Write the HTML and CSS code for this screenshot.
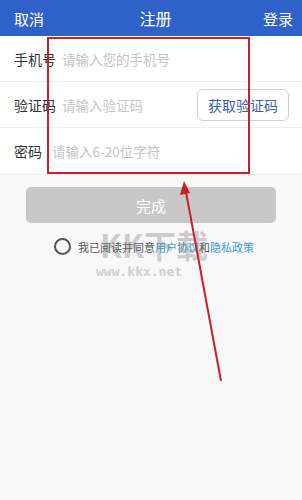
FILE: index.html
```html
<!DOCTYPE html>
<html lang="zh">
<head>
<meta charset="utf-8">
<link rel="stylesheet" href="styles.css">
</head>
<body>
<div class="page">
  <header class="topbar">
    <span class="tb-left">取消</span>
    <span class="tb-title">注册</span>
    <span class="tb-right">登录</span>
  </header>
  <section class="form">
    <div class="row">
      <span class="label">手机号</span>
      <span class="ph">请输入您的手机号</span>
    </div>
    <div class="row">
      <span class="label">验证码</span>
      <span class="ph">请输入验证码</span>
      <span class="code-btn">获取验证码</span>
    </div>
    <div class="row">
      <span class="label short">密码</span>
      <span class="ph">请输入6-20位字符</span>
    </div>
  </section>
  <div class="actions">
    <div class="done">完成</div>
    <div class="agree">
      <span class="circle"></span>
      <span class="agree-text">我已阅读并同意<span class="link">用户协议</span>和<span class="link">隐私政策</span></span>
    </div>
  </div>
  <div class="redbox"></div>
  <svg class="overlay" width="302" height="500" viewBox="0 0 302 500">
    <text class="wm-big" x="100" y="258">KK下载</text>
    <text class="wm-small" x="96" y="276">www.kkx.net</text>
    <line x1="221" y1="381" x2="186" y2="192" stroke="#c8202a" stroke-width="2"/>
    <polygon points="184,181 180,195 190,193" fill="#c8202a"/>
  </svg>
</div>
</body>
</html>
```
FILE: styles.css
```css
* { box-sizing: border-box; }
html, body { margin: 0; padding: 0; }
body {
  width: 302px;
  height: 500px;
  overflow: hidden;
  background: #f8f8f8;
  font-family: "Noto Sans CJK SC", "Noto Sans", sans-serif;
}
.page { position: relative; width: 302px; height: 500px; }
.topbar {
  height: 36px;
  background: #2e62c8;
  color: #fff;
  display: flex;
  align-items: center;
  justify-content: space-between;
  padding: 0 9px 0 14px;
  font-size: 15px;
}
.tb-title { font-size: 16px; margin-left: 4px; }
.form { background: #fff; }
.row {
  height: 46px;
  display: flex;
  align-items: center;
  padding-left: 14px;
  border-bottom: 1px solid #eeeeee;
  font-size: 14px;
}
.row:last-child { height: 47px; }
.label { color: #333; width: 48px; }
.label.short { width: 38px; }
.ph { color: #c4c4c4; font-size: 13.5px; flex: 1; }
.code-btn {
  width: 92px;
  height: 32px;
  margin-right: 13px;
  border: 1px solid #cdd1d8;
  border-radius: 6px;
  display: flex;
  align-items: center;
  justify-content: center;
  color: #3c5fa8;
  font-size: 14px;
}
.actions { padding: 12px 26px 0; }
.done {
  height: 36px;
  background: #c8c8c8;
  border-radius: 5px;
  color: #fff;
  font-size: 15px;
  display: flex;
  align-items: center;
  justify-content: center;
}
.agree {
  margin-top: 15px;
  display: flex;
  align-items: center;
  padding-left: 28px;
  font-size: 11px;
  color: #555;
  white-space: nowrap;
}
.circle {
  flex: none;
  width: 17px;
  height: 17px;
  border: 2px solid #555;
  border-radius: 50%;
  margin-right: 7px;
}
.link { color: #3d9bd6; }
.redbox {
  position: absolute;
  left: 47px;
  top: 37px;
  width: 203px;
  height: 137px;
  border: 2px solid #cc1f2a;
}
.overlay { position: absolute; left: 0; top: 0; pointer-events: none; }
.wm-big {
  font-family: "Noto Sans CJK SC", sans-serif;
  font-size: 32px;
  font-weight: bold;
  fill: rgba(120,120,120,0.35);
}
.wm-small {
  font-family: "DejaVu Sans Mono", monospace;
  font-weight: bold;
  font-size: 13px;
  fill: rgba(140,140,140,0.4);
}
```
